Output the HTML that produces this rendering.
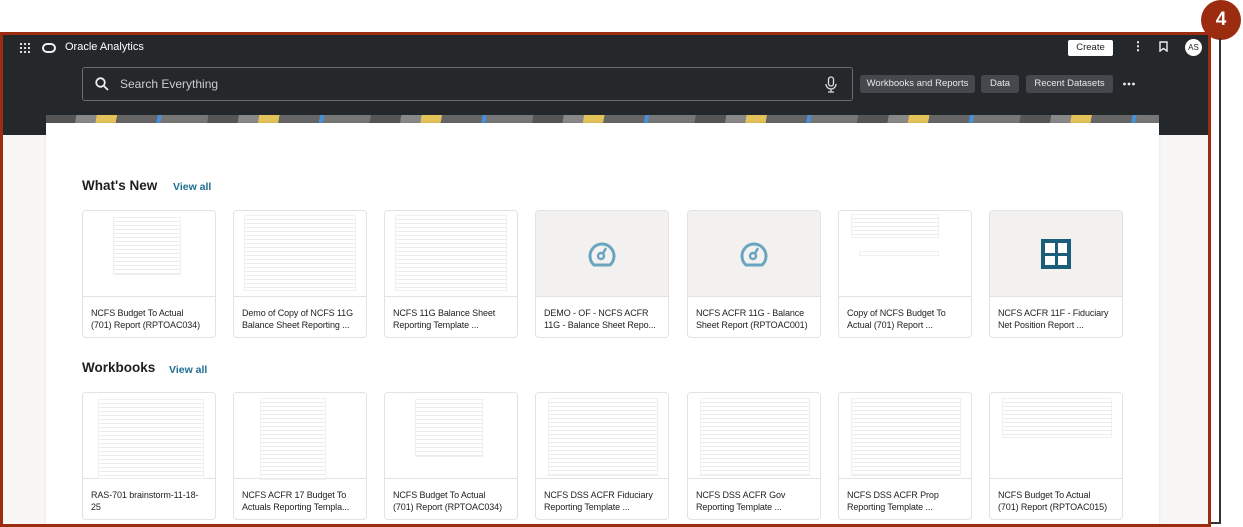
<!DOCTYPE html>
<html><head><meta charset="utf-8"><style>
*{box-sizing:border-box;margin:0;padding:0}
body{width:1243px;height:527px;overflow:hidden;background:#fff;font-family:"Liberation Sans",sans-serif;position:relative}
.frame{position:absolute;left:0;top:32px;width:1211px;height:495px;border:3px solid #9b2c10;overflow:hidden;background:#f8f7f5}
.outer{position:absolute;left:1219px;top:38px;width:2px;height:486px;background:#333}
.outerb{position:absolute;left:1206px;top:522px;width:15px;height:2px;background:#333}
.badge{position:absolute;left:1201px;top:0;width:40px;height:40px;border-radius:50%;background:#9b2c10;color:#fff;font-weight:bold;font-size:19px;text-align:center;line-height:40px}
.hdr{position:absolute;left:0;top:0;width:100%;height:100px;background:#25282b}
.banner{position:absolute;left:43px;top:80px;width:1113px;height:9px;background:repeating-linear-gradient(100deg,#555 0 30px,#888 30px 50px,#e3c25a 50px 70px,#666 70px 110px,#4a90d9 110px 114px,#777 114px 160px)}
.panel{position:absolute;left:43px;top:88px;width:1113px;height:420px;background:#fff;box-shadow:0 0 3px rgba(0,0,0,.1)}
.t{position:absolute;color:#fff}
.search{position:absolute;left:79px;top:32px;width:771px;height:34px;border:1px solid #6a6d70;border-radius:3px}
.chip{position:absolute;top:40px;height:18px;background:#45494d;border-radius:3px;color:#e8e8e8;font-size:9.5px;line-height:18px;text-align:center}
h2{position:absolute;font-size:13.5px;font-weight:bold;color:#1e1e1e}
.va{position:absolute;font-size:10.5px;color:#1e6d94;font-weight:bold}
.card{position:absolute;width:134px;height:128px;border:1px solid #e2e2e2;border-radius:4px;background:#fff;overflow:hidden}
.th{height:86px;border-bottom:1px solid #e2e2e2;position:relative;background:#fff}
.th.g{background:#f2f1ef}
.doc{position:absolute;background:repeating-linear-gradient(#fff 0 3px,#ececec 3px 4px);border:1px solid #f0f0f0}
.cap{padding:10px 8px 0;font-size:9px;line-height:12px;color:#222;letter-spacing:-0.1px;white-space:nowrap}
</style></head><body>
<div class="badge">4</div>
<div class="outer"></div><div class="outerb"></div>
<div class="frame">
 <div class="hdr"></div>
 <div class="banner"></div>
 <svg style="position:absolute;left:17px;top:8px" width="10" height="10"><g fill="#ddd"><rect x="0" y="0" width="2" height="2"/><rect x="4" y="0" width="2" height="2"/><rect x="8" y="0" width="2" height="2"/><rect x="0" y="4" width="2" height="2"/><rect x="4" y="4" width="2" height="2"/><rect x="8" y="4" width="2" height="2"/><rect x="0" y="8" width="2" height="2"/><rect x="4" y="8" width="2" height="2"/><rect x="8" y="8" width="2" height="2"/></g></svg>
 <div style="position:absolute;left:39px;top:8px;width:14px;height:10px;border:2px solid #eee;border-radius:5px"></div>
 <div class="t" style="left:62px;top:6px;font-size:11px">Oracle Analytics</div>
 <div style="position:absolute;left:1065px;top:5px;width:45px;height:16px;background:#fff;border-radius:2px;font-size:9.5px;color:#222;text-align:center;line-height:16px">Create</div>
 <div class="t" style="left:1129px;top:4px;font-size:12px;font-weight:bold">⋮</div>
 <svg style="position:absolute;left:1156px;top:6px" width="9" height="11"><path d="M1 1H8V10L4.5 7.5 1 10Z" fill="none" stroke="#eee" stroke-width="1.4"/></svg>
 <div style="position:absolute;left:1182px;top:4px;width:17px;height:17px;border-radius:50%;background:#fff;font-size:8px;color:#222;text-align:center;line-height:17px">AS</div>
 <div class="search">
  <svg style="position:absolute;left:12px;top:9px" width="14" height="14"><circle cx="5.5" cy="5.5" r="4.3" fill="none" stroke="#eee" stroke-width="1.8"/><path d="M8.7 8.7L13 13" stroke="#eee" stroke-width="1.8"/></svg>
  <div class="t" style="left:37px;top:9px;font-size:12px;color:#ccc">Search Everything</div>
  <svg style="position:absolute;left:742px;top:8px" width="12" height="17"><rect x="3.5" y="1" width="5" height="9" rx="2.5" fill="none" stroke="#ddd" stroke-width="1.3"/><path d="M1 8a5 5 0 0 0 10 0M6 13v3M3 16h6" fill="none" stroke="#ddd" stroke-width="1.3"/></svg>
 </div>
 <div class="chip" style="left:857px;width:115px">Workbooks and Reports</div>
 <div class="chip" style="left:978px;width:38px">Data</div>
 <div class="chip" style="left:1023px;width:87px">Recent Datasets</div>
 <svg style="position:absolute;left:1120px;top:47px" width="12" height="4"><circle cx="1.5" cy="2" r="1.4" fill="#eee"/><circle cx="6" cy="2" r="1.4" fill="#eee"/><circle cx="10.5" cy="2" r="1.4" fill="#eee"/></svg>
 <div class="panel"></div>
 <div style="position:absolute;left:1205px;top:96px;width:3px;height:262px;background:#999"></div>

 <h2 style="left:79px;top:143px">What's New</h2><div class="va" style="left:170px;top:146px">View all</div>
 <h2 style="left:79px;top:325px">Workbooks</h2><div class="va" style="left:166px;top:329px">View all</div>

 <div class="card" style="left:79px;top:175px"><div class="th"><div class="doc" style="left:30px;top:6px;width:68px;height:58px"></div></div><div class="cap">NCFS Budget To Actual<br>(701) Report (RPTOAC034)</div></div>
 <div class="card" style="left:230px;top:175px"><div class="th"><div class="doc" style="left:10px;top:4px;width:112px;height:76px"></div></div><div class="cap">Demo of Copy of NCFS 11G<br>Balance Sheet Reporting ...</div></div>
 <div class="card" style="left:381px;top:175px"><div class="th"><div class="doc" style="left:10px;top:4px;width:112px;height:76px"></div></div><div class="cap">NCFS 11G Balance Sheet<br>Reporting Template ...</div></div>
 <div class="card" style="left:532px;top:175px"><div class="th g"><svg style="position:absolute;left:51px;top:29px" width="30" height="28"><path d="M7 25A12 12 0 1 1 23 25Z" fill="none" stroke="#6aa5bf" stroke-width="3" stroke-linejoin="round"/><circle cx="14" cy="16" r="3" fill="none" stroke="#6aa5bf" stroke-width="2.4"/><path d="M16 13.5L19 8" stroke="#6aa5bf" stroke-width="2.4"/></svg></div><div class="cap">DEMO - OF - NCFS ACFR<br>11G - Balance Sheet Repo...</div></div>
 <div class="card" style="left:684px;top:175px"><div class="th g"><svg style="position:absolute;left:51px;top:29px" width="30" height="28"><path d="M7 25A12 12 0 1 1 23 25Z" fill="none" stroke="#6aa5bf" stroke-width="3" stroke-linejoin="round"/><circle cx="14" cy="16" r="3" fill="none" stroke="#6aa5bf" stroke-width="2.4"/><path d="M16 13.5L19 8" stroke="#6aa5bf" stroke-width="2.4"/></svg></div><div class="cap">NCFS ACFR 11G - Balance<br>Sheet Report (RPTOAC001)</div></div>
 <div class="card" style="left:835px;top:175px"><div class="th"><div class="doc" style="left:12px;top:3px;width:88px;height:24px"></div><div class="doc" style="left:20px;top:40px;width:80px;height:5px"></div></div><div class="cap">Copy of NCFS Budget To<br>Actual (701) Report ...</div></div>
 <div class="card" style="left:986px;top:175px"><div class="th g"><div style="position:absolute;left:51px;top:28px;width:30px;height:30px;background:#1b5e7a;padding:4px;display:grid;grid-template-columns:1fr 1fr;gap:3px"><i style="background:#fff;display:block"></i><i style="background:#fff"></i><i style="background:#fff"></i><i style="background:#fff"></i></div></div><div class="cap">NCFS ACFR 11F - Fiduciary<br>Net Position Report ...</div></div>

 <div class="card" style="left:79px;top:357px"><div class="th"><div class="doc" style="left:15px;top:6px;width:106px;height:80px"></div></div><div class="cap">RAS-701 brainstorm-11-18-<br>25</div></div>
 <div class="card" style="left:230px;top:357px"><div class="th"><div class="doc" style="left:26px;top:5px;width:66px;height:82px"></div></div><div class="cap">NCFS ACFR 17 Budget To<br>Actuals Reporting Templa...</div></div>
 <div class="card" style="left:381px;top:357px"><div class="th"><div class="doc" style="left:30px;top:6px;width:68px;height:58px"></div></div><div class="cap">NCFS Budget To Actual<br>(701) Report (RPTOAC034)</div></div>
 <div class="card" style="left:532px;top:357px"><div class="th"><div class="doc" style="left:12px;top:5px;width:110px;height:78px"></div></div><div class="cap">NCFS DSS ACFR Fiduciary<br>Reporting Template ...</div></div>
 <div class="card" style="left:684px;top:357px"><div class="th"><div class="doc" style="left:12px;top:5px;width:110px;height:78px"></div></div><div class="cap">NCFS DSS ACFR Gov<br>Reporting Template ...</div></div>
 <div class="card" style="left:835px;top:357px"><div class="th"><div class="doc" style="left:12px;top:5px;width:110px;height:78px"></div></div><div class="cap">NCFS DSS ACFR Prop<br>Reporting Template ...</div></div>
 <div class="card" style="left:986px;top:357px"><div class="th"><div class="doc" style="left:12px;top:5px;width:110px;height:40px"></div></div><div class="cap">NCFS Budget To Actual<br>(701) Report (RPTOAC015)</div></div>
</div>
</body></html>
